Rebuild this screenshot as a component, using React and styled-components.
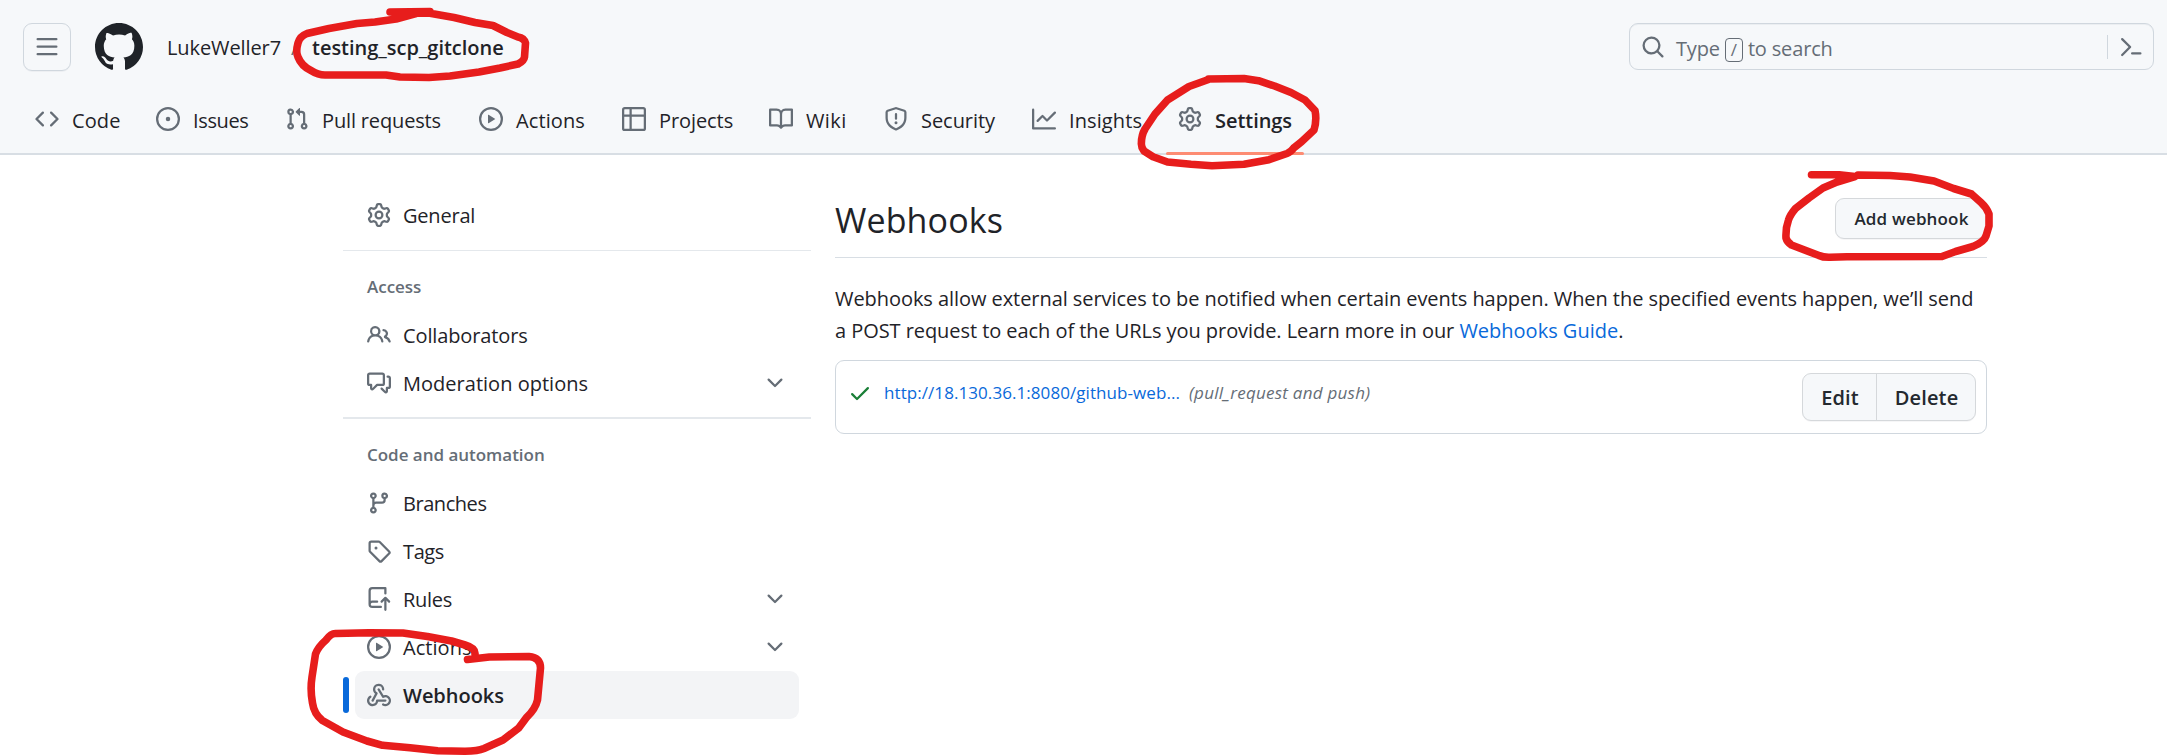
import React from "react";
import styled, { createGlobalStyle } from "styled-components";

const color = {
  text: "#1f2328",
  muted: "#656d76",
  border: "#d0d7de",
  subtle: "#f6f8fa",
  link: "#0969da",
  marker: "#e71d1c",
};

const paths = {
  menu: ["M1 2.75A.75.75 0 0 1 1.75 2h12.5a.75.75 0 0 1 0 1.5H1.75A.75.75 0 0 1 1 2.75Zm0 5A.75.75 0 0 1 1.75 7h12.5a.75.75 0 0 1 0 1.5H1.75A.75.75 0 0 1 1 7.75ZM1.75 12h12.5a.75.75 0 0 1 0 1.5H1.75a.75.75 0 0 1 0-1.5Z"],
  mark: ["M8 0c4.42 0 8 3.58 8 8a8.013 8.013 0 0 1-5.45 7.59c-.4.08-.55-.17-.55-.38 0-.27.01-1.13.01-2.2 0-.75-.25-1.23-.54-1.48 1.78-.2 3.65-.88 3.65-3.95 0-.88-.31-1.59-.82-2.15.08-.2.36-1.02-.08-2.12 0 0-.67-.22-2.2.82-.64-.18-1.32-.27-2-.27-.68 0-1.36.09-2 .27-1.53-1.03-2.2-.82-2.2-.82-.44 1.1-.16 1.92-.08 2.12-.51.56-.82 1.28-.82 2.15 0 3.06 1.86 3.75 3.64 3.95-.23.2-.44.55-.51 1.07-.46.21-1.61.55-2.33-.66-.15-.24-.6-.83-1.23-.82-.67.01-.27.38.01.53.34.19.73.9.82 1.13.16.45.68 1.31 2.69.94 0 .67.01 1.3.01 1.49 0 .21-.15.45-.55.38A7.995 7.995 0 0 1 0 8c0-4.42 3.58-8 8-8Z"],
  search: ["M10.68 11.74a6 6 0 0 1-7.922-8.982 6 6 0 0 1 8.982 7.922l3.04 3.04a.749.749 0 0 1-.326 1.275.749.749 0 0 1-.734-.215ZM11.5 7a4.499 4.499 0 1 0-8.997 0A4.499 4.499 0 0 0 11.5 7Z"],
  palette: ["m6.354 8.04-4.773 4.773a.75.75 0 1 0 1.061 1.06L7.945 8.57a.75.75 0 0 0 0-1.06L2.642 2.206a.75.75 0 0 0-1.06 1.061L6.353 8.04ZM8.75 11.5a.75.75 0 0 0 0 1.5h5.5a.75.75 0 0 0 0-1.5h-5.5Z"],
  code: ["m11.28 3.22 4.25 4.25a.75.75 0 0 1 0 1.06l-4.25 4.25a.749.749 0 0 1-1.275-.326.749.749 0 0 1 .215-.734L13.94 8l-3.72-3.72a.749.749 0 0 1 .326-1.275.749.749 0 0 1 .734.215Zm-6.56 0a.751.751 0 0 1 1.042.018.751.751 0 0 1 .018 1.042L2.06 8l3.72 3.72a.749.749 0 0 1-.326 1.275.749.749 0 0 1-.734-.215L.47 8.53a.75.75 0 0 1 0-1.06Z"],
  issue: ["M8 9.5a1.5 1.5 0 1 0 0-3 1.5 1.5 0 0 0 0 3Z", "M8 0a8 8 0 1 1 0 16A8 8 0 0 1 8 0ZM1.5 8a6.5 6.5 0 1 0 13 0 6.5 6.5 0 0 0-13 0Z"],
  pull: ["M1.5 3.25a2.25 2.25 0 1 1 3 2.122v5.256a2.251 2.251 0 1 1-1.5 0V5.372A2.25 2.25 0 0 1 1.5 3.25Zm5.677-.177L9.573.677A.25.25 0 0 1 10 .854V2.5h1A2.5 2.5 0 0 1 13.5 5v5.628a2.251 2.251 0 1 1-1.5 0V5a1 1 0 0 0-1-1h-1v1.646a.25.25 0 0 1-.427.177L7.177 3.427a.25.25 0 0 1 0-.354ZM3.75 2.5a.75.75 0 1 0 0 1.5.75.75 0 0 0 0-1.5Zm0 9.5a.75.75 0 1 0 0 1.5.75.75 0 0 0 0-1.5Zm8.25.75a.75.75 0 1 0 1.5 0 .75.75 0 0 0-1.5 0Z"],
  play: ["M8 0a8 8 0 1 1 0 16A8 8 0 0 1 8 0ZM1.5 8a6.5 6.5 0 1 0 13 0 6.5 6.5 0 0 0-13 0Zm4.879-2.773 4.264 2.559a.25.25 0 0 1 0 .428l-4.264 2.559A.25.25 0 0 1 6 10.559V5.442a.25.25 0 0 1 .379-.215Z"],
  table: ["M0 1.75C0 .784.784 0 1.75 0h12.5C15.216 0 16 .784 16 1.75v12.5A1.75 1.75 0 0 1 14.25 16H1.75A1.75 1.75 0 0 1 0 14.25ZM6.5 6.5v8h7.75a.25.25 0 0 0 .25-.25V6.5Zm8-1.5V1.75a.25.25 0 0 0-.25-.25H6.5V5Zm-13 1.5v7.75c0 .138.112.25.25.25H5v-8ZM5 5V1.5H1.75a.25.25 0 0 0-.25.25V5Z"],
  book: ["M0 1.75A.75.75 0 0 1 .75 1h4.253c1.227 0 2.317.59 3 1.501A3.743 3.743 0 0 1 11.006 1h4.245a.75.75 0 0 1 .75.75v10.5a.75.75 0 0 1-.75.75h-4.507a2.25 2.25 0 0 0-1.591.659l-.622.621a.75.75 0 0 1-1.06 0l-.622-.621A2.25 2.25 0 0 0 5.258 13H.75a.75.75 0 0 1-.75-.75Zm7.251 10.324.004-5.073-.002-2.253A2.25 2.25 0 0 0 5.003 2.5H1.5v9h3.757a3.75 3.75 0 0 1 1.994.574ZM8.755 4.75l-.004 7.322a3.752 3.752 0 0 1 1.992-.572H14.5v-9h-3.495a2.25 2.25 0 0 0-2.25 2.25Z"],
  shield: ["M7.467.133a1.748 1.748 0 0 1 1.066 0l5.25 1.68A1.75 1.75 0 0 1 15 3.48V7c0 1.566-.32 3.182-1.303 4.682-.983 1.498-2.585 2.813-5.032 3.855a1.697 1.697 0 0 1-1.33 0c-2.447-1.042-4.049-2.357-5.032-3.855C1.32 10.182 1 8.566 1 7V3.48a1.75 1.75 0 0 1 1.217-1.667Zm.61 1.429a.25.25 0 0 0-.153 0l-5.25 1.68a.25.25 0 0 0-.174.238V7c0 1.358.275 2.666 1.057 3.86.784 1.194 2.121 2.34 4.366 3.297a.196.196 0 0 0 .154 0c2.245-.956 3.582-2.104 4.366-3.298C13.225 9.666 13.5 8.36 13.5 7V3.48a.251.251 0 0 0-.174-.237l-5.25-1.68ZM8.75 4.75v3a.75.75 0 0 1-1.5 0v-3a.75.75 0 0 1 1.5 0ZM9 10.5a1 1 0 1 1-2 0 1 1 0 0 1 2 0Z"],
  graph: ["M1.5 1.75V13.5h13.75a.75.75 0 0 1 0 1.5H.75a.75.75 0 0 1-.75-.75V1.75a.75.75 0 0 1 1.5 0Zm14.28 2.53-5.25 5.25a.75.75 0 0 1-1.06 0L7 7.06 4.28 9.78a.751.751 0 0 1-1.042-.018.751.751 0 0 1-.018-1.042l3.25-3.25a.75.75 0 0 1 1.06 0L10 7.94l4.72-4.72a.751.751 0 0 1 1.042.018.751.751 0 0 1 .018 1.042Z"],
  gear: ["M8 0a8.2 8.2 0 0 1 .701.031C9.444.095 9.99.645 10.16 1.29l.288 1.107c.018.066.079.158.212.224.231.114.454.243.668.386.123.082.233.09.299.071l1.103-.303c.644-.176 1.392.021 1.82.63.27.385.506.792.704 1.218.315.675.111 1.422-.364 1.891l-.814.806c-.049.048-.098.147-.088.294.016.257.016.515 0 .772-.01.147.038.246.088.294l.814.806c.475.469.679 1.216.364 1.891a7.977 7.977 0 0 1-.704 1.217c-.428.61-1.176.807-1.82.63l-1.102-.302c-.067-.019-.177-.011-.3.071a5.909 5.909 0 0 1-.668.386c-.133.066-.194.158-.211.224l-.29 1.106c-.168.646-.715 1.196-1.458 1.26a8.006 8.006 0 0 1-1.402 0c-.743-.064-1.289-.614-1.458-1.26l-.289-1.106c-.018-.066-.079-.158-.212-.224a5.738 5.738 0 0 1-.668-.386c-.123-.082-.233-.09-.299-.071l-1.103.303c-.644.176-1.392-.021-1.82-.63a8.12 8.12 0 0 1-.704-1.218c-.315-.675-.111-1.422.363-1.891l.815-.806c.05-.048.098-.147.088-.294a6.214 6.214 0 0 1 0-.772c.01-.147-.038-.246-.088-.294l-.815-.806C.635 6.045.431 5.298.746 4.623a7.92 7.92 0 0 1 .704-1.217c.428-.61 1.176-.807 1.82-.63l1.102.302c.067.019.177.011.3-.071.214-.143.437-.272.668-.386.133-.066.194-.158.211-.224l.29-1.106C6.009.645 6.556.095 7.299.03 7.53.01 7.764 0 8 0Zm-.571 1.525c-.036.003-.108.036-.137.146l-.289 1.105c-.147.561-.549.967-.998 1.189-.173.086-.34.183-.5.29-.417.278-.97.423-1.529.27l-1.103-.303c-.109-.03-.175.016-.195.045-.22.312-.412.644-.573.99-.014.031-.021.11.059.19l.815.806c.411.406.562.957.53 1.456a4.709 4.709 0 0 0 0 .582c.032.499-.119 1.05-.53 1.456l-.815.806c-.081.08-.073.159-.059.19.162.346.353.677.573.989.02.03.085.076.195.046l1.102-.303c.56-.153 1.113-.008 1.53.27.161.107.328.204.501.29.447.222.85.629.997 1.189l.289 1.105c.029.109.101.143.137.146a6.6 6.6 0 0 0 1.142 0c.036-.003.108-.036.137-.146l.289-1.105c.147-.561.549-.967.998-1.189.173-.086.34-.183.5-.29.417-.278.97-.423 1.529-.27l1.103.303c.109.029.175-.016.195-.045.22-.313.411-.644.573-.99.014-.031.021-.11-.059-.19l-.815-.806c-.411-.406-.562-.957-.53-1.456a4.709 4.709 0 0 0 0-.582c-.032-.499.119-1.05.53-1.456l.815-.806c.081-.08.073-.159.059-.19a6.464 6.464 0 0 0-.573-.989c-.02-.03-.085-.076-.195-.046l-1.102.303c-.56.153-1.113.008-1.53-.27a4.44 4.44 0 0 0-.501-.29c-.447-.222-.85-.629-.997-1.189l-.289-1.105c-.029-.11-.101-.143-.137-.146a6.6 6.6 0 0 0-1.142 0ZM11 8a3 3 0 1 1-6 0 3 3 0 0 1 6 0ZM9.5 8a1.5 1.5 0 1 0-3.001.001A1.5 1.5 0 0 0 9.5 8Z"],
  people: ["M2 5.5a3.5 3.5 0 1 1 5.898 2.549 5.508 5.508 0 0 1 3.034 4.084.75.75 0 1 1-1.482.235 4 4 0 0 0-7.9 0 .75.75 0 0 1-1.482-.236A5.507 5.507 0 0 1 3.102 8.05 3.493 3.493 0 0 1 2 5.5ZM11 4a3.001 3.001 0 0 1 2.22 5.018 5.01 5.01 0 0 1 2.56 3.012.749.749 0 0 1-.885.954.752.752 0 0 1-.549-.514 3.507 3.507 0 0 0-2.522-2.372.75.75 0 0 1-.574-.73v-.352a.75.75 0 0 1 .416-.672A1.5 1.5 0 0 0 11 5.5.75.75 0 0 1 11 4Zm-5.5-.5a2 2 0 1 0-.001 3.999A2 2 0 0 0 5.5 3.5Z"],
  comments: ["M1.75 1h8.5c.966 0 1.75.784 1.75 1.75v5.5A1.75 1.75 0 0 1 10.25 10H7.061l-2.574 2.573A1.458 1.458 0 0 1 2 11.543V10h-.25A1.75 1.75 0 0 1 0 8.25v-5.5C0 1.784.784 1 1.75 1ZM1.5 2.75v5.5c0 .138.112.25.25.25h1a.75.75 0 0 1 .75.75v2.19l2.72-2.72a.749.749 0 0 1 .53-.22h3.5a.25.25 0 0 0 .25-.25v-5.5a.25.25 0 0 0-.25-.25h-8.5a.25.25 0 0 0-.25.25Zm13 2a.25.25 0 0 0-.25-.25h-.5a.75.75 0 0 1 0-1.5h.5c.966 0 1.75.784 1.75 1.75v5.5A1.75 1.75 0 0 1 14.25 12H14v1.543a1.458 1.458 0 0 1-2.487 1.03L9.22 12.28a.749.749 0 0 1 .326-1.275.749.749 0 0 1 .734.215l2.22 2.22v-2.19a.75.75 0 0 1 .75-.75h1a.25.25 0 0 0 .25-.25Z"],
  branch: ["M9.5 3.25a2.25 2.25 0 1 1 3 2.122V6A2.5 2.5 0 0 1 10 8.5H6a1 1 0 0 0-1 1v1.128a2.251 2.251 0 1 1-1.5 0V5.372a2.25 2.25 0 1 1 1.5 0v1.836A2.493 2.493 0 0 1 6 7h4a1 1 0 0 0 1-1v-.628A2.25 2.25 0 0 1 9.5 3.25Zm-6 0a.75.75 0 1 0 1.5 0 .75.75 0 0 0-1.5 0Zm8.25-.75a.75.75 0 1 0 0 1.5.75.75 0 0 0 0-1.5ZM4.25 12a.75.75 0 1 0 0 1.5.75.75 0 0 0 0-1.5Z"],
  tag: ["M1 7.775V2.75C1 1.784 1.784 1 2.75 1h5.025c.464 0 .91.184 1.238.513l6.25 6.25a1.75 1.75 0 0 1 0 2.474l-5.026 5.026a1.75 1.75 0 0 1-2.474 0l-6.25-6.25A1.752 1.752 0 0 1 1 7.775Zm1.5 0c0 .066.026.13.073.177l6.25 6.25a.25.25 0 0 0 .354 0l5.025-5.025a.25.25 0 0 0 0-.354l-6.25-6.25a.25.25 0 0 0-.177-.073H2.75a.25.25 0 0 0-.25.25ZM6 5a1 1 0 1 1 0 2 1 1 0 0 1 0-2Z"],
  rules: ["M1 2.5A2.5 2.5 0 0 1 3.5 0h8.75a.75.75 0 0 1 .75.75v3.5a.75.75 0 0 1-1.5 0V1.5h-8a1 1 0 0 0-1 1v6.708A2.493 2.493 0 0 1 3.5 9h3.25a.75.75 0 0 1 0 1.5H3.5a1 1 0 0 0 0 2h5.75a.75.75 0 0 1 0 1.5H3.5A2.5 2.5 0 0 1 1 11.5Zm13.23 7.79v-.001l-1.224-1.224v6.184a.75.75 0 0 1-1.5 0V9.066L10.28 10.29a.75.75 0 0 1-1.06-1.061l2.505-2.504a.75.75 0 0 1 1.06 0L15.29 9.23a.751.751 0 0 1-.018 1.042.751.751 0 0 1-1.042.018Z"],
  webhook: [
    "M5.5 4.25a2.25 2.25 0 0 1 4.5 0 .75.75 0 0 0 1.5 0 3.75 3.75 0 1 0-6.14 2.889l-2.272 4.258a.75.75 0 0 0 1.324.706L7 7.25a.75.75 0 0 0-.309-1.015A2.25 2.25 0 0 1 5.5 4.25Z",
    "M7.364 3.607a.75.75 0 0 1 1.03.257l2.608 4.349a3.75 3.75 0 1 1-.628 6.785.75.75 0 0 1 .752-1.299 2.25 2.25 0 1 0-.033-3.88.75.75 0 0 1-1.03-.256L7.107 4.636a.75.75 0 0 1 .257-1.03Z",
    "M2.9 8.776A.75.75 0 0 1 2.625 9.8 2.25 2.25 0 1 0 6 11.75a.75.75 0 0 1 .75-.751h5.5a.75.75 0 0 1 0 1.5H7.425a3.751 3.751 0 1 1-5.55-3.998.75.75 0 0 1 1.024.274Z",
  ],
  chevron: ["M12.78 5.22a.749.749 0 0 1 0 1.06l-4.25 4.25a.749.749 0 0 1-1.06 0L3.22 6.28a.749.749 0 1 1 1.06-1.06L8 8.939l3.72-3.719a.749.749 0 0 1 1.06 0Z"],
  check: ["M13.78 4.22a.75.75 0 0 1 0 1.06l-7.25 7.25a.75.75 0 0 1-1.06 0L2.22 9.28a.751.751 0 0 1 .018-1.042.751.751 0 0 1 1.042-.018L6 10.94l6.72-6.72a.75.75 0 0 1 1.06 0Z"],
};

const GlobalStyle = createGlobalStyle`
  * { box-sizing: border-box; }
  body {
    margin: 0;
    background: #fff;
    color: ${color.text};
    font-family: "Open Sans", "Noto Sans", sans-serif;
    font-size: 20px;
    line-height: 32px;
  }
  a { color: inherit; text-decoration: none; }
`;

const Page = styled.div`
  position: relative;
  width: 2167px;
  height: 756px;
  overflow: hidden;
`;

const Glyph = styled.svg`
  display: block;
  flex: none;
  width: ${(p) => p.$size}px;
  height: ${(p) => p.$size}px;
  fill: ${(p) => p.$color};
`;

function Icon({ name, size = 24, fill = color.muted }) {
  return (
    <Glyph viewBox="0 0 16 16" $size={size} $color={fill} aria-hidden="true">
      {paths[name].map((d) => (
        <path key={d} d={d} />
      ))}
    </Glyph>
  );
}

const Header = styled.header`
  height: 155px;
  padding: 23px 13px 0 23px;
  background: ${color.subtle};
  border-bottom: 2px solid #d8dee4;
`;

const TopBar = styled.div`
  display: flex;
  align-items: flex-start;
  height: 48px;
`;

const MenuButton = styled.button`
  display: flex;
  align-items: center;
  justify-content: center;
  width: 48px;
  height: 48px;
  padding: 0;
  background: transparent;
  border: 1px solid ${color.border};
  border-radius: 9px;
  box-shadow: 0 1px 0 rgba(31, 35, 40, 0.04);
`;

const LogoLink = styled.a`
  margin-left: 24px;
`;

const Breadcrumb = styled.nav`
  display: flex;
  align-items: center;
  height: 48px;
  margin-left: 24px;
  padding-top: 2px;
`;

const Owner = styled.a`
  width: 124px;
  letter-spacing: -0.1px;
`;

const Slash = styled.span`
  width: 21px;
  color: ${color.muted};
`;

const RepoName = styled.a`
  font-weight: 600;
  letter-spacing: -0.02px;
`;

const SearchBox = styled.div`
  display: flex;
  align-items: center;
  width: 525px;
  height: 47px;
  margin-left: auto;
  padding: 0 10px 0 11px;
  border: 1px solid ${color.border};
  border-radius: 9px;
  box-shadow: inset 0 1px 0 rgba(208, 215, 222, 0.3);
  color: ${color.muted};
`;

const SearchHint = styled.div`
  display: flex;
  align-items: center;
  flex: 1;
  gap: 5px;
  padding: 4px 0 0 11px;
  letter-spacing: -0.16px;
`;

const Key = styled.kbd`
  width: 18px;
  height: 24px;
  margin: 2px 0 0;
  border: 1px solid ${color.muted};
  border-radius: 4px;
  font-family: inherit;
  font-size: 17px;
  line-height: 21px;
  text-align: center;
`;

const SearchDivider = styled.span`
  width: 1px;
  height: 24px;
  margin-right: 11px;
  background: ${color.border};
`;

const Tabs = styled.nav`
  display: flex;
  gap: 12px;
  margin-top: 24px;
`;

const Tab = styled.a`
  position: relative;
  display: flex;
  align-items: center;
  gap: 12px;
  width: ${(p) => p.$width}px;
  height: 48px;
  padding: 0 12px;
  font-weight: ${(p) => (p.$active ? 600 : 400)};
  letter-spacing: ${(p) => p.$tracking}px;
  white-space: nowrap;

  &::after {
    content: "";
    display: ${(p) => (p.$active ? "block" : "none")};
    position: absolute;
    left: 0;
    right: 0;
    bottom: -12px;
    height: 3px;
    border-radius: 2px;
    background: #fd8c73;
  }
`;

const TabText = styled.span`
  padding: 4px 0 0 1px;
`;

const Layout = styled.div`
  display: grid;
  grid-template-columns: 468px 1152px;
  column-gap: 24px;
  padding: 36px 0 0 343px;
`;

const SideGroup = styled.section`
  border-top: ${(p) => p.$rule || 0}px solid #e4e8ec;
  padding-top: ${(p) => (p.$rule ? 11 : 0)}px;
  padding-bottom: ${(p) => p.$after || 0}px;
`;

const SideTitle = styled.h3`
  height: 49px;
  margin: 0;
  padding-left: 24px;
  color: ${color.muted};
  font-size: 17px;
  font-weight: 600;
  line-height: 49px;
  letter-spacing: -0.02px;
`;

const SideItem = styled.a`
  position: relative;
  display: flex;
  align-items: center;
  gap: 12px;
  height: 48px;
  margin: 0 12px;
  padding: 0 12px;
  border-radius: 9px;
  background: ${(p) => (p.$current ? "#f3f4f6" : "transparent")};
  font-weight: ${(p) => (p.$current ? 600 : 400)};
  letter-spacing: ${(p) => p.$tracking}px;

  &::before {
    content: "";
    display: ${(p) => (p.$current ? "block" : "none")};
    position: absolute;
    left: -12px;
    top: 6px;
    width: 6px;
    height: 36px;
    border-radius: 3px;
    background: ${color.link};
  }
`;

const SideLabel = styled.span`
  flex: 1;
  padding-top: 2px;
`;

const TitleRow = styled.div`
  display: flex;
  align-items: center;
  justify-content: space-between;
  height: 67px;
  padding-bottom: 11px;
  border-bottom: 1px solid #d8dee4;
`;

const Title = styled.h2`
  margin: 0;
  padding-top: 2px;
  font-size: 34px;
  font-weight: 400;
  line-height: 50px;
  letter-spacing: 0.11px;
`;

const AddButton = styled.button`
  width: 152px;
  height: 41px;
  padding: 0 0 0 1px;
  background: ${color.subtle};
  border: 1px solid #d5d8db;
  border-radius: 9px;
  box-shadow: 0 1px 0 rgba(31, 35, 40, 0.04);
  color: #24292f;
  font: 600 17px "Open Sans", "Noto Sans", sans-serif;
  letter-spacing: 0.16px;
`;

const Intro = styled.p`
  margin: 25px 0 13px;
  letter-spacing: -0.06px;
  white-space: nowrap;
`;

const GuideLink = styled.a`
  color: ${color.link};
  letter-spacing: 0;
`;

const HookCard = styled.div`
  display: flex;
  align-items: flex-start;
  height: 74px;
  padding: 12px 10px 0 12px;
  border: 1px solid ${color.border};
  border-radius: 9px;
`;

const HookInfo = styled.div`
  display: flex;
  align-items: center;
  flex: 1;
  height: 39px;
  font-size: 17px;
`;

const HookUrl = styled.a`
  width: 305px;
  margin-left: 12px;
  color: ${color.link};
  letter-spacing: 0.07px;
`;

const HookEvents = styled.em`
  color: ${color.muted};
  letter-spacing: 0.25px;
`;

const ButtonGroup = styled.div`
  display: flex;
  height: 48px;
  background: ${color.subtle};
  border: 1px solid #d5d8db;
  border-radius: 9px;
  box-shadow: 0 1px 0 rgba(31, 35, 40, 0.04);
`;

const GroupButton = styled.button`
  width: ${(p) => p.$width}px;
  padding: 0 0 0 1px;
  background: transparent;
  border: 0;
  color: #24292f;
  font: 600 20px "Open Sans", "Noto Sans", sans-serif;
  letter-spacing: 0.15px;

  & + & {
    border-left: 1px solid #d5d8db;
  }
`;

const Markup = styled.svg`
  position: absolute;
  inset: 0;
  pointer-events: none;
  fill: none;
  stroke: ${color.marker};
  stroke-width: 7.6;
  stroke-linecap: round;
  stroke-linejoin: round;
`;

const tabs = [
  { icon: "code", label: "Code", width: 109, tracking: 0.1 },
  { icon: "issue", label: "Issues", width: 117, tracking: -0.36 },
  { icon: "pull", label: "Pull requests", width: 182, tracking: -0.15 },
  { icon: "play", label: "Actions", width: 131, tracking: 0.11 },
  { icon: "table", label: "Projects", width: 135, tracking: -0.08 },
  { icon: "book", label: "Wiki", width: 103, tracking: 0.4 },
  { icon: "shield", label: "Security", width: 136, tracking: -0.05 },
  { icon: "graph", label: "Insights", width: 134, tracking: 0.1 },
  { icon: "gear", label: "Settings", width: 138, tracking: -0.05, active: true },
];

const groups = [
  { after: 11, items: [{ icon: "gear", label: "General", tracking: -0.2 }] },
  {
    title: "Access",
    rule: 1,
    after: 10,
    items: [
      { icon: "people", label: "Collaborators", tracking: -0.12 },
      { icon: "comments", label: "Moderation options", tracking: 0.02, expandable: true },
    ],
  },
  {
    title: "Code and automation",
    rule: 2,
    items: [
      { icon: "branch", label: "Branches", tracking: -0.45 },
      { icon: "tag", label: "Tags", tracking: -0.38 },
      { icon: "rules", label: "Rules", tracking: -0.28, expandable: true },
      { icon: "play", label: "Actions", tracking: 0.05, expandable: true },
      { icon: "webhook", label: "Webhooks", tracking: -0.03, current: true },
    ],
  },
];

const strokes = [
  "M390 12L430 11.6M416 13.5L396 19L375 22L357 23.5L329 28.5L307 33.5Q300 36 298 43Q295.500 52 298 57Q301.500 66 311 70.500Q318 75 325 75L386 75L400 77L429 77.500L450 76L479 72L500 68L518 64Q524 61 524.500 57L525.500 43Q524 38 518 37L507 32.500L493 25.500L475 22.500L454 17.500L430 13.300L416 12",
  "M1208.500 79L1244 78.500L1258.500 80.700L1274.600 86L1291 92.500L1305 100L1315 110.500Q1317 120 1314 130L1301.500 141.700L1294 147.700Q1291 152 1287 153.500L1269 159.700L1244 164.300L1212 165.700L1191 164.300L1167.500 162L1153 156.700L1144 151Q1141 147 1141.400 143Q1141.500 135 1145 129L1155 114L1167.500 100L1189 86.500L1208.500 79.500",
  "M1811.500 174.700L1839 174.700L1855 176.500L1837 182L1823 188L1809 198L1795.500 208.500Q1790 215 1788.500 220Q1785.500 228 1786 238Q1787 242 1791.500 245L1819 255.500Q1823 257.500 1830 257.300L1847 256.800L1942 256.500L1955.600 251.500L1973 246.500Q1984 242 1986 236L1989 226L1989 214Q1987 208 1981 202.500L1971.500 194L1953.600 188.500L1934 181L1910 177L1890 175.500L1858 175",
  "M467.500 659.500L489.400 657L529 656.500Q540.500 657.500 540.500 668L537.500 700Q535.500 709 526.500 717.500L518.700 728L503 740L484 748.500Q478 751 465 751.300L437.700 750.700L410 747.700L382.600 745.300L367 741L355 736.500L343 732L322.400 720.500Q314 714 312.500 703Q310 690 312 677L315.500 654Q318 647 326 640Q331 633 336 633.500L369 632.700L403 633L427.400 636.500L451.500 641L465 645Q475.500 648 475 654",
];

function App() {
  return (
    <>
      <GlobalStyle />
      <Page>
        <Header>
          <TopBar>
            <MenuButton aria-label="Open menu">
              <Icon name="menu" />
            </MenuButton>
            <LogoLink href="#" aria-label="Home">
              <Icon name="mark" size={48} fill={color.text} />
            </LogoLink>
            <Breadcrumb>
              <Owner href="#">LukeWeller7</Owner>
              <Slash>/</Slash>
              <RepoName href="#">testing_scp_gitclone</RepoName>
            </Breadcrumb>
            <SearchBox>
              <Icon name="search" />
              <SearchHint>
                <span>Type</span>
                <Key>/</Key>
                <span>to search</span>
              </SearchHint>
              <SearchDivider />
              <Icon name="palette" />
            </SearchBox>
          </TopBar>
          <Tabs>
            {tabs.map((t) => (
              <Tab key={t.label} href="#" $width={t.width} $tracking={t.tracking} $active={t.active}>
                <Icon name={t.icon} />
                <TabText>{t.label}</TabText>
              </Tab>
            ))}
          </Tabs>
        </Header>
        <Layout>
          <aside>
            {groups.map((g, i) => (
              <SideGroup key={i} $rule={g.rule} $after={g.after}>
                {g.title && <SideTitle>{g.title}</SideTitle>}
                {g.items.map((item) => (
                  <SideItem key={item.label} href="#" $current={item.current} $tracking={item.tracking}>
                    <Icon name={item.icon} />
                    <SideLabel>{item.label}</SideLabel>
                    {item.expandable && <Icon name="chevron" />}
                  </SideItem>
                ))}
              </SideGroup>
            ))}
          </aside>
          <main>
            <TitleRow>
              <Title>Webhooks</Title>
              <AddButton>Add webhook</AddButton>
            </TitleRow>
            <Intro>
              Webhooks allow external services to be notified when certain events happen. When the specified events
              happen, we’ll send
              <br />a POST request to each of the URLs you provide. Learn more in our{" "}
              <GuideLink href="#">Webhooks Guide</GuideLink>.
            </Intro>
            <HookCard>
              <HookInfo>
                <Icon name="check" fill="#1a7f37" />
                <HookUrl href="#">http://18.130.36.1:8080/github-web...</HookUrl>
                <HookEvents>(pull_request and push)</HookEvents>
              </HookInfo>
              <ButtonGroup>
                <GroupButton $width={73}>Edit</GroupButton>
                <GroupButton $width={99}>Delete</GroupButton>
              </ButtonGroup>
            </HookCard>
          </main>
        </Layout>
        <Markup width="2167" height="756" viewBox="0 0 2167 756">
          {strokes.map((d) => (
            <path key={d} d={d} />
          ))}
        </Markup>
      </Page>
    </>
  );
}

export default App;
